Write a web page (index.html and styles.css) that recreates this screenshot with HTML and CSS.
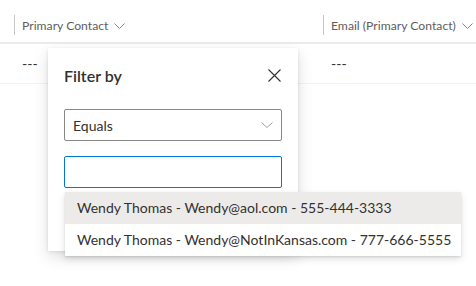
FILE: index.html
```html
<!DOCTYPE html>
<html lang="en">
<head>
    <meta charset="UTF-8">
    <title>Filter by</title>
    <link rel="stylesheet" href="styles.css">
</head>
<body>
    <div class="grid">
        <div class="grid-header">
            <div class="col col-contact">
                <span class="col-title">Primary Contact</span>
                <svg class="chevron" width="11" height="6" viewBox="0 0 11 6"><path d="M0.5 0.5 L5.5 5.5 L10.5 0.5" fill="none" stroke="#8a8886" stroke-width="1"/></svg>
            </div>
            <div class="col col-email">
                <span class="col-title">Email (Primary Contact)</span>
                <svg class="chevron" width="11" height="6" viewBox="0 0 11 6"><path d="M0.5 0.5 L5.5 5.5 L10.5 0.5" fill="none" stroke="#8a8886" stroke-width="1"/></svg>
            </div>
        </div>
        <div class="grid-row">
            <div class="cell cell-contact">---</div>
            <div class="cell cell-email">---</div>
        </div>
    </div>

    <div class="filter-panel">
        <div class="panel-head">
            <h3>Filter by</h3>
            <svg class="close" width="13" height="13" viewBox="0 0 13 13"><path d="M0.5 0.5 L12.5 12.5 M12.5 0.5 L0.5 12.5" fill="none" stroke="#323130" stroke-width="1.1"/></svg>
        </div>
        <div class="dropdown">
            <span>Equals</span>
            <svg width="12" height="6" viewBox="0 0 12 6"><path d="M0.5 0.5 L6 5.5 L11.5 0.5" fill="none" stroke="#a19f9d" stroke-width="1"/></svg>
        </div>
        <input type="text" class="search-box">
    </div>

    <ul class="suggestions">
        <li class="selected">Wendy Thomas - Wendy@aol.com - 555-444-3333</li>
        <li>Wendy Thomas - Wendy@NotInKansas.com - 777-666-5555</li>
    </ul>
</body>
</html>
```

FILE: styles.css
```css
body {
    margin: 0;
    background-color: #fff;
    font-family: "Segoe UI", "Lato", sans-serif;
    color: #323130;
    position: relative;
    width: 476px;
    height: 286px;
    overflow: hidden;
}
.grid-header {
    display: flex;
    height: 44px;
    border-bottom: 2px solid #edebe9;
    box-sizing: border-box;
    align-items: center;
}
.col {
    display: flex;
    align-items: center;
    height: 20px;
    border-left: 1px solid #c8c6c4;
    padding-left: 7px;
    gap: 6px;
    margin-top: 8px;
    white-space: nowrap;
    box-sizing: border-box;
    flex-shrink: 0;
}
.col-contact {
    margin-left: 14px;
    width: 309px;
}
.col-title {
    font-size: 12.2px;
    color: #605e5c;
}
.chevron {
    margin-top: 1px;
}
.grid-row {
    display: flex;
    height: 40px;
    border-bottom: 1px solid #f3f2f1;
    box-sizing: border-box;
    align-items: center;
    font-size: 14px;
    color: #323130;
}
.cell-contact {
    padding-left: 22px;
    width: 309px;
}
.filter-panel {
    position: absolute;
    left: 48px;
    top: 48px;
    width: 250px;
    height: 203px;
    background: #fff;
    box-sizing: border-box;
    padding: 0 16px;
    box-shadow: 0 6.4px 14.4px 0 rgba(0,0,0,0.13), 0 1.2px 3.6px 0 rgba(0,0,0,0.11);
}
.panel-head {
    display: flex;
    justify-content: space-between;
    align-items: center;
    height: 54px;
    padding-right: 1px;
}
.panel-head h3 {
    margin: 0;
    font-size: 16px;
    font-weight: 600;
    color: #323130;
}
.dropdown {
    display: flex;
    justify-content: space-between;
    align-items: center;
    height: 32px;
    box-sizing: border-box;
    border: 1px solid #8a8886;
    border-radius: 2px;
    padding: 0 8px;
    margin-top: 7px;
    font-size: 14px;
}
.search-box {
    display: block;
    width: 100%;
    height: 32px;
    box-sizing: border-box;
    margin-top: 15px;
    border: 1px solid #0078d4;
    border-radius: 2px;
    outline: none;
}
.suggestions {
    position: absolute;
    left: 65px;
    top: 192px;
    width: 396px;
    margin: 0;
    padding: 0;
    list-style: none;
    background: #fff;
    box-shadow: 0 3.2px 7.2px 0 rgba(0,0,0,0.13), 0 0.6px 1.8px 0 rgba(0,0,0,0.11);
}
.suggestions li {
    height: 32px;
    line-height: 32px;
    padding-left: 12px;
    font-size: 14px;
    color: #323130;
    white-space: nowrap;
}
.suggestions li.selected {
    background: #edebe9;
}
```
